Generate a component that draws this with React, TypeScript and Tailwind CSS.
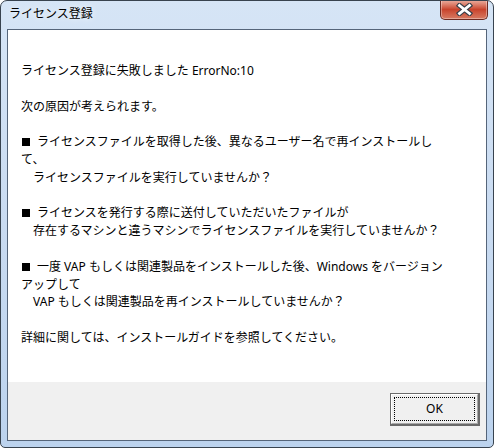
const lines: string[] = [
  "ライセンス登録に失敗しました ErrorNo:10",
  "",
  "次の原因が考えられます。",
  "",
  "■ライセンスファイルを取得した後、異なるユーザー名で再インストールし",
  "て、",
  "　ライセンスファイルを実行していませんか？",
  "",
  "■ライセンスを発行する際に送付していただいたファイルが",
  "　存在するマシンと違うマシンでライセンスファイルを実行していませんか？",
  "",
  "■一度 VAP もしくは関連製品をインストールした後、Windows をバージョン",
  "アップして",
  "　VAP もしくは関連製品を再インストールしていませんか？",
  "",
  "詳細に関しては、インストールガイドを参照してください。",
];

const CloseButton = () => (
  <div className="-mt-px w-[48px] h-[20px] rounded-b-[5px] border border-t-0 border-[#6b2a22] bg-gradient-to-b from-[#eab0a2] via-[#c8432c] to-[#d77a62] flex items-center justify-center shadow-[inset_0_0_0_1px_rgba(255,255,255,0.35)]">
    <svg width="17" height="13" viewBox="0 0 17 13">
      <path
        d="M3.5 2.5 L13.5 10.5 M13.5 2.5 L3.5 10.5"
        stroke="#3a3f48"
        strokeWidth="5"
        strokeLinecap="square"
      />
      <path
        d="M3.5 2.5 L13.5 10.5 M13.5 2.5 L3.5 10.5"
        stroke="#ffffff"
        strokeWidth="2.8"
        strokeLinecap="square"
      />
    </svg>
  </div>
);

const Line = ({ text }: { text: string }) => {
  if (text.startsWith("■")) {
    return (
      <div className="h-[17.8px] whitespace-pre flex items-center">
        <span className="w-[16px] shrink-0 flex items-center">
          <span className="ml-[1px] w-[8px] h-[8px] bg-black" />
        </span>
        <span>{text.slice(1)}</span>
      </div>
    );
  }
  return <div className="h-[17.8px] whitespace-pre">{text}</div>;
};

export default function App() {
  return (
    <div
      className="w-[494px] h-[448px] bg-white"
      style={{ fontFamily: '"Noto Sans", "Noto Sans CJK JP", sans-serif' }}
    >
      <div className="w-full h-full flex flex-col border border-[#38434f] rounded-t-[7px] rounded-b-[5px] bg-gradient-to-b from-[#d6e5f6] via-[#c9dbf1] to-[#bcd3ee] overflow-hidden">
        {/* title bar */}
        <div className="h-[28px] flex items-start pl-[8px] pr-[5px]">
          <span className="mt-[5px] text-[12px] leading-[16px] text-black [text-shadow:0_0_6px_rgba(255,255,255,0.95)]">
            ライセンス登録
          </span>
          <div className="ml-auto">
            <CloseButton />
          </div>
        </div>

        {/* client */}
        <div className="mx-[6px] mb-[6px] border border-[#55657a] flex flex-col">
          <div className="h-[352px] bg-white pt-[32px] pl-[13px] text-[12px] leading-[17.8px] text-black">
            {lines.map((l, i) => (
              <Line key={i} text={l} />
            ))}
          </div>
          <div className="h-[58px] bg-[#f0f0f0] flex justify-end pt-[11px] pr-[6px]">
            <div className="w-[90px] h-[33px] border-t border-l border-r-2 border-b-2 border-[#6a6a6a] bg-[#f0f0f0]">
              <div className="w-full h-full border border-t-white border-l-white border-r-[#a8a8a8] border-b-[#a8a8a8] p-[2px]">
                <div className="w-full h-full border border-dotted border-black flex items-center justify-center text-[12px] text-black">
                  OK
                </div>
              </div>
            </div>
          </div>
        </div>
      </div>
    </div>
  );
}
